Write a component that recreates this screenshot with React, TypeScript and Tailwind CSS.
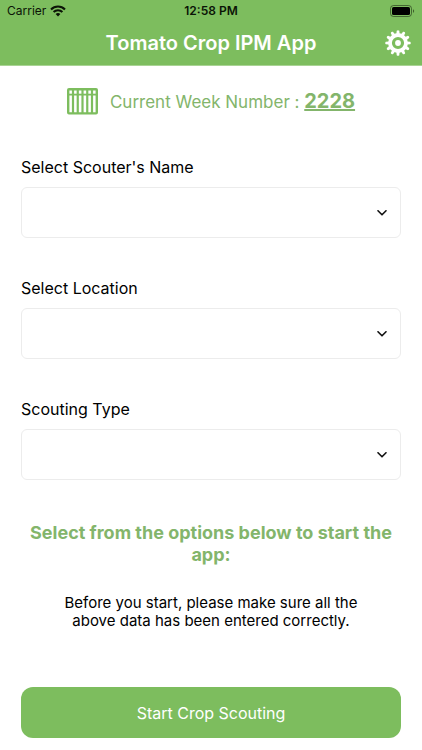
import { ReactNode } from 'react'

const teeth = [0, 30, 60, 90, 120, 150, 180, 210, 240, 270, 300, 330]
const slats = [6, 10.75, 15.5, 20.25, 25]

const fields = [
  { id: 'scouter', label: "Select Scouter's Name" },
  { id: 'location', label: 'Select Location' },
  { id: 'type', label: 'Scouting Type' },
]

function WifiIcon() {
  return (
    <svg width="16" height="12" viewBox="0 0 16 12" fill="none" stroke="#0b1406" strokeWidth="2.1">
      <path d="M1 4.4a10 10 0 0 1 14 0" />
      <path d="M3.6 7.1a6.2 6.2 0 0 1 8.8 0" />
      <path d="M8 11.6 5.6 9.1a3.4 3.4 0 0 1 4.8 0Z" fill="#0b1406" stroke="none" />
    </svg>
  )
}

function BatteryIcon() {
  return (
    <svg width="25" height="12" viewBox="0 0 25 12" fill="none">
      <rect x="0.5" y="0.5" width="21" height="11" rx="3" stroke="#0b1406" strokeOpacity="0.5" />
      <rect x="2" y="2" width="18" height="8" rx="1.6" fill="#000" />
      <path d="M23 4.2c1.5.5 1.5 3.1 0 3.6Z" fill="#0b1406" fillOpacity="0.55" />
    </svg>
  )
}

function GearIcon() {
  return (
    <svg width="26" height="26" viewBox="0 0 26 26" fill="none">
      <circle cx="13" cy="13" r="8" stroke="#fff" strokeWidth="3.8" />
      <circle cx="13" cy="13" r="2.9" fill="#fff" />
      {teeth.map((deg) => (
        <path key={deg} d="M11.4 4 11.7 .8Q13-.4 14.3.8L14.6 4Z" fill="#fff" transform={`rotate(${deg} 13 13)`} />
      ))}
    </svg>
  )
}

function CrateIcon() {
  return (
    <svg width="31" height="27" viewBox="0 0 31 27" fill="none" stroke="#7dbd5e">
      <rect x="1.2" y="1.2" width="28.6" height="24.2" rx="0.8" strokeWidth="2.4" />
      <path d="M1 6.6h29" strokeWidth="1.8" />
      {slats.map((x) => (
        <path key={x} d={`M${x} 1v25`} strokeWidth="2.2" />
      ))}
    </svg>
  )
}

function SelectField({ id, label, children }: { id: string; label: string; children?: ReactNode }) {
  return (
    <div className="flex flex-col gap-2.5">
      <label htmlFor={id} className="text-base leading-5 text-black">
        {label}
      </label>
      <div className="relative">
        <select
          id={id}
          defaultValue=""
          className="block h-[51px] w-full appearance-none rounded-md border border-[#ececec] bg-white px-4 text-base"
        >
          <option value=""></option>
          {children}
        </select>
        <svg
          className="pointer-events-none absolute top-1/2 right-3.5 -translate-y-1/2"
          width="10"
          height="6"
          viewBox="0 0 10 6"
          fill="none"
          stroke="#111"
          strokeWidth="1.6"
        >
          <path d="m1 .8 4 4 4-4" strokeLinecap="round" strokeLinejoin="round" />
        </svg>
      </div>
    </div>
  )
}

export default function App() {
  return (
    <div className="min-h-screen bg-white font-['Inter',sans-serif]">
      <header className="border-b border-[#a9d394] bg-[#7dbd5e]">
        <div className="grid h-[21px] grid-cols-3 items-center px-[7px] text-xs text-[#0b1406]">
          <div className="flex items-center gap-1">
            <span>Carrier</span>
            <WifiIcon />
          </div>
          <span className="text-center font-semibold">12:58 PM</span>
          <div className="flex justify-end">
            <BatteryIcon />
          </div>
        </div>
        <div className="relative flex h-11 items-center justify-center">
          <h1 className="text-xl font-semibold text-white">Tomato Crop IPM App</h1>
          <button type="button" aria-label="Settings" className="absolute right-[11px]">
            <GearIcon />
          </button>
        </div>
      </header>

      <main className="px-[21px] pt-5">
        <div className="flex h-[30px] items-center justify-center gap-3 text-[17px] text-[#83b56b]">
          <CrateIcon />
          <p>
            Current Week Number : <span className="text-xl font-bold underline">2228</span>
          </p>
        </div>

        <form className="mt-[41px] flex flex-col gap-10">
          {fields.map((f) => (
            <SelectField key={f.id} id={f.id} label={f.label} />
          ))}
        </form>

        <h2 className="mt-[42px] text-center text-lg leading-[22px] font-bold text-[#83b56b]">
          Select from the options below to start the app:
        </h2>
        <p className="mx-auto mt-7 max-w-[300px] text-center text-[15px] leading-[18px] text-black">
          Before you start, please make sure all the above data has been entered correctly.
        </p>
        <button type="button" className="mt-[57px] h-[51px] w-full rounded-xl bg-[#7dbd5e] text-base text-white">
          Start Crop Scouting
        </button>
      </main>
    </div>
  )
}
